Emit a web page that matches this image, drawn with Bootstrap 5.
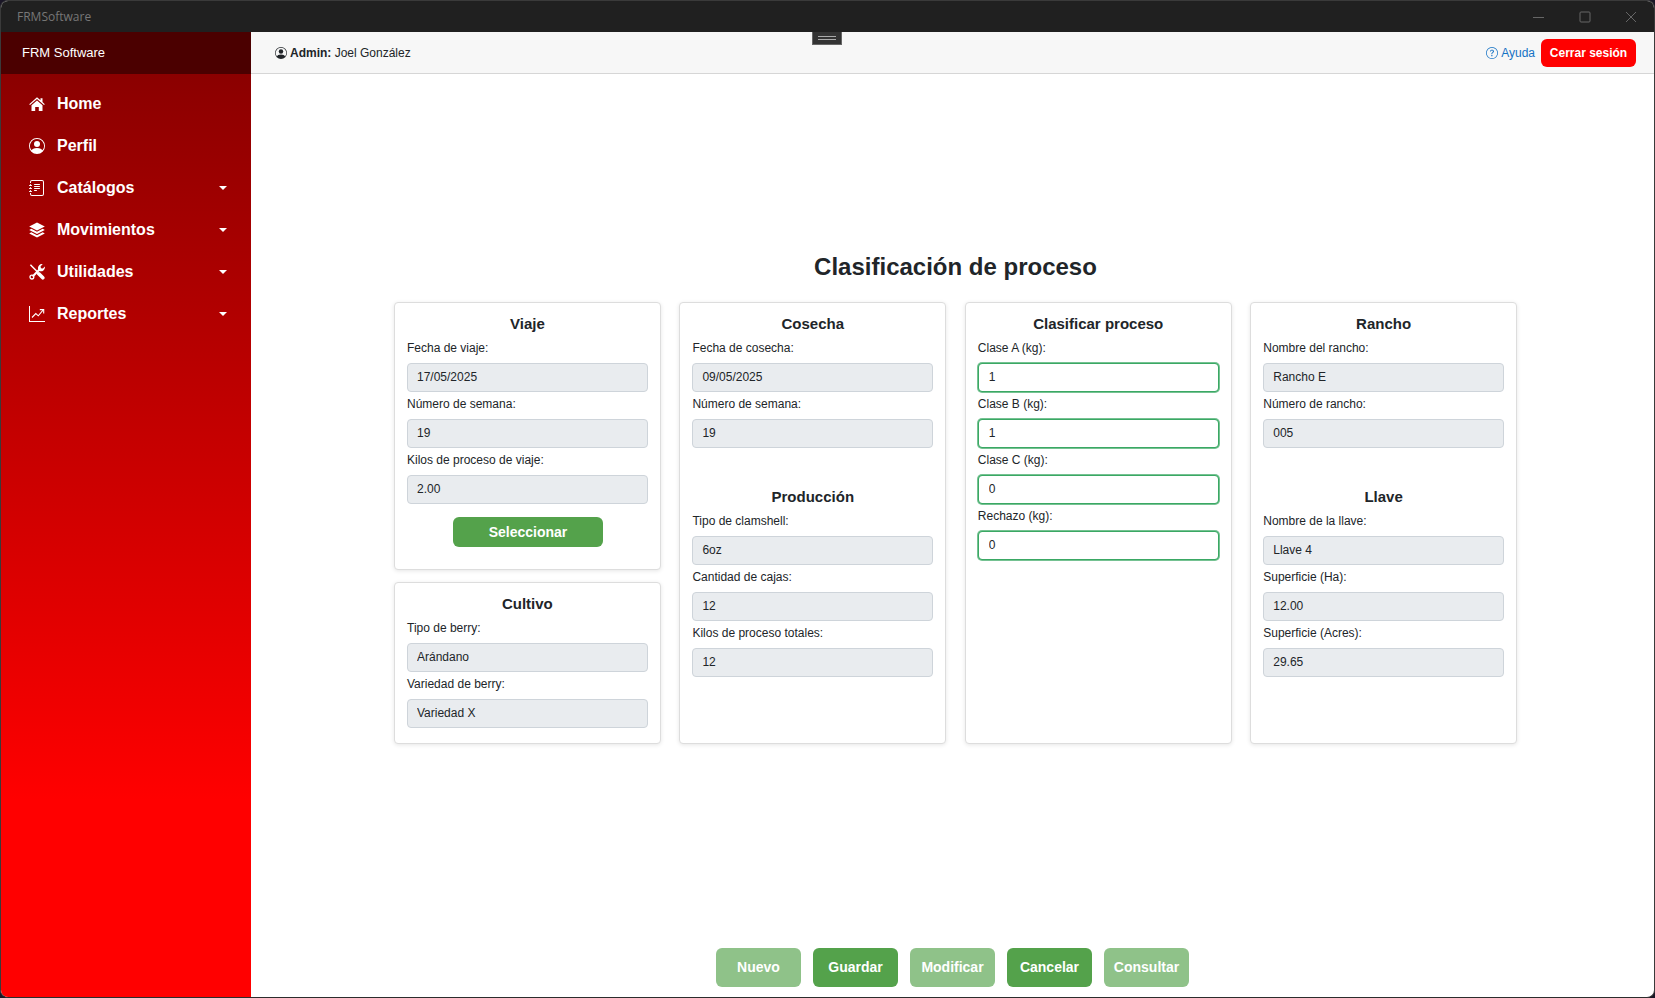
<!DOCTYPE html>
<html lang="es">
<head>
  <meta charset="UTF-8">
  <title>FRMSoftware</title>
  <link href="https://cdn.jsdelivr.net/npm/bootstrap@5.3.2/dist/css/bootstrap.min.css" rel="stylesheet">
  <style>
    html, body { height: 100%; overflow: hidden; }
    body { background: #1a1626; font-family: "Liberation Sans", Arial, sans-serif; font-size: 12px; color: #212529; }
    .app-window { height: 998px; border: 1px solid #3a3a3a; border-bottom-color: #2c2c2c; border-radius: 8px; overflow: hidden; background: #fff; }
    .title-bar { height: 31px; background: #202020; color: #777; font-family: "Open Sans", sans-serif; font-size: 12px; padding-left: 16px; }
    .win-controls { gap: 30px; padding-right: 15px; }
    .win-controls svg { display: block; width: 16px; height: 16px; }
    .app-body { height: 965px; position: relative; }
    .side-panel { width: 250px; color: #fff; }
    .side-brand { height: 42px; background: #4b0000; font-size: 13px; padding-left: 21px; }
    .side-menu { padding-top: 9px; background: linear-gradient(to bottom, #8b0000 0, #ff0000 726px); }
    .side-link { height: 42px; padding: 0 24px 0 28px; color: #fff; font-size: 16px; font-weight: 700; text-decoration: none; }
    .side-link:hover { color: #fff; }
    .side-link svg { width: 16px; height: 16px; margin-right: 12px; flex: none; fill: #fff; }
    .side-link.dropdown-toggle::after { margin-left: auto; }
    .top-strip { height: 42px; background: #f7f7f7; border-bottom: 1px solid #d6d6d6; padding: 0 18px 0 24px; }
    .top-strip svg { width: 12px; height: 12px; fill: currentColor; }
    .admin-info { gap: 3px; }
    .help-group { gap: 6px; }
    .help-link { color: #1572c4; font-size: 12px; text-decoration: none; gap: 3px; }
    .logout-btn { --bs-btn-padding-x: 0; --bs-btn-padding-y: 0; width: 95px; height: 28px; background: #f00; border: 0; color: #fff; font-size: 12px; font-weight: 700; border-radius: 6px; }
    .logout-btn:hover { background: #f00; color: #fff; }
    .drag-handle { position: absolute; left: 811px; top: 0; width: 30px; height: 13px; background: #333; border: 1px solid #666; border-top: 0; display: flex; flex-direction: column; justify-content: center; gap: 2px; padding: 0 5px; }
    .drag-handle span { display: block; height: 1px; background: #aaa; }
    .page-area { padding-top: 179px; }
    .page-head { font-size: 24px; font-weight: 700; line-height: 28px; margin: 0 0 21px; padding-left: 6px; }
    .forms-grid { width: 1123px; margin-left: 143px; display: grid; grid-template-columns: repeat(4, 1fr); gap: 18.67px; }
    .form-stack { gap: 12px; }
    .form-box { --bs-card-border-color: #dddddd; --bs-card-border-radius: 4px; --bs-card-inner-border-radius: 3px; box-shadow: 0 1px 4px rgba(0,0,0,.1); padding: 11px 12px 13px 12px; }
    .box-title { font-size: 15px; font-weight: 700; line-height: 19px; text-align: center; margin: 0 0 5px; }
    .box-title.next-section { margin-top: 37px; }
    .field-label { display: block; font-size: 12px; line-height: 18px; margin: 1px 0 6px; }
    .field-input { height: 29px; font-size: 12px; line-height: 14px; padding: 0 9px 2px; border-radius: 4px; border-color: #ced4da; margin-bottom: 2px; color: #212529; }
    .field-input:disabled { background: #e9ecef; }
    .field-input.is-live { padding: 0 10px 2px; border-color: #3aa864; box-shadow: 0 0 0 1px rgba(58,168,100,.7); }
    .pick-btn { --bs-btn-padding-y: 0; width: 150px; height: 30px; margin: 11px auto 9px 46px; padding-bottom: 3px; display: block; }
    .green-btn { background: #54a24b; border: 0; color: #fff; font-size: 14px; font-weight: 700; border-radius: 6px; padding: 0; }
    .green-btn:hover { background: #54a24b; color: #fff; }
    .green-btn:disabled { background: #54a24b; color: #fff; opacity: .65; }
    .action-bar { gap: 12px; padding-bottom: 10px; }
    .action-bar .green-btn { width: 85px; height: 39px; }
  </style>
</head>
<body>
  <div class="app-window">
    <div class="title-bar d-flex align-items-center justify-content-between">
      <span>FRMSoftware</span>
      <div class="win-controls d-flex align-items-center">
        <svg viewBox="0 0 16 16" stroke="#666" fill="none"><path d="M2 8.5h11"/></svg>
        <svg viewBox="0 0 16 16" stroke="#666" fill="none"><rect x="3" y="3" width="10" height="10" rx="1"/></svg>
        <svg viewBox="0 0 16 16" stroke="#666" fill="none"><path d="M3 3l10 10M13 3L3 13"/></svg>
      </div>
    </div>

    <div class="app-body d-flex">
      <aside class="side-panel d-flex flex-column flex-shrink-0">
        <div class="side-brand d-flex align-items-center flex-shrink-0">FRM Software</div>
        <nav class="side-menu flex-grow-1">
          <a href="#" class="side-link d-flex align-items-center">
            <svg viewBox="0 0 16 16"><path d="M8 1.200 11.500 4.300V2.200h2v3.900L15.800 8.200l-.8.900L8 3 1 9.100l-.8-.9z"/><path d="M8 4.400l5.500 4.800V15h-3.700v-4H6.200v4H2.500V9.200z"/></svg>
            Home
          </a>
          <a href="#" class="side-link d-flex align-items-center">
            <svg viewBox="0 0 16 16"><path d="M11 6a3 3 0 1 1-6 0 3 3 0 0 1 6 0"/><path fill-rule="evenodd" d="M0 8a8 8 0 1 1 16 0A8 8 0 0 1 0 8m8-7a7 7 0 0 0-5.468 11.37C3.242 11.226 4.805 10 8 10s4.757 1.225 5.468 2.37A7 7 0 0 0 8 1"/></svg>
            Perfil
          </a>
          <a href="#" class="side-link dropdown-toggle d-flex align-items-center">
            <svg viewBox="0 0 16 16"><path d="M5 10.5a.5.5 0 0 1 .5-.5h2a.5.5 0 0 1 0 1h-2a.5.5 0 0 1-.5-.5m0-2a.5.5 0 0 1 .5-.5h5a.5.5 0 0 1 0 1h-5a.5.5 0 0 1-.5-.5m0-2a.5.5 0 0 1 .5-.5h5a.5.5 0 0 1 0 1h-5a.5.5 0 0 1-.5-.5m0-2a.5.5 0 0 1 .5-.5h5a.5.5 0 0 1 0 1h-5a.5.5 0 0 1-.5-.5"/><path d="M3 0h10a2 2 0 0 1 2 2v12a2 2 0 0 1-2 2H3a2 2 0 0 1-2-2v-1h1v1a1 1 0 0 0 1 1h10a1 1 0 0 0 1-1V2a1 1 0 0 0-1-1H3a1 1 0 0 0-1 1v1H1V2a2 2 0 0 1 2-2"/><path d="M1 5v-.5a.5.5 0 0 1 1 0V5h.5a.5.5 0 0 1 0 1h-2a.5.5 0 0 1 0-1zm0 3v-.5a.5.5 0 0 1 1 0V8h.5a.5.5 0 0 1 0 1h-2a.5.5 0 0 1 0-1zm0 3v-.5a.5.5 0 0 1 1 0v.5h.5a.5.5 0 0 1 0 1h-2a.5.5 0 0 1 0-1z"/></svg>
            Catálogos
          </a>
          <a href="#" class="side-link dropdown-toggle d-flex align-items-center">
            <svg viewBox="0 0 16 16"><path d="M8 .5l7.800 4L8 8.500.2 4.500z"/><path d="M2.300 6.800 8 9.700l5.700-2.900 2.100 1.200L8 12 .2 8z"/><path d="M2.300 10.300 8 13.200l5.700-2.900 2.100 1.200L8 15.500.2 11.500z"/></svg>
            Movimientos
          </a>
          <a href="#" class="side-link dropdown-toggle d-flex align-items-center">
            <svg viewBox="0 0 16 16">
              <path d="M3.600 12.400 10.500 5.500" stroke="#fff" stroke-width="2.100" fill="none"/>
              <circle cx="2.900" cy="13.100" r="1.900" stroke="#fff" stroke-width="1.300" fill="none"/>
              <path d="M15.800 2.400a4 4 0 0 1-5.600 4.500L9.200 5.400A4 4 0 0 1 13.700.2l-2.100 2 .3 2 2 .3z"/>
              <path d="M1.400.8 8.800 8.200" stroke="#fff" stroke-width="1.500" fill="none"/>
              <path d="M9.800 9.800 13.800 13.800" stroke="#fff" stroke-width="3.600" stroke-linecap="round" fill="none"/>
            </svg>
            Utilidades
          </a>
          <a href="#" class="side-link dropdown-toggle d-flex align-items-center">
            <svg viewBox="0 0 16 16">
              <path d="M0 0h1v15h15v1H0z"/>
              <path d="M3 11.500 6.800 7.500 9.300 9.800 14 4.200" stroke="#fff" stroke-width="1.100" fill="none"/>
              <path d="M10.800 3.600h3.900v3.900" stroke="#fff" stroke-width="1.100" fill="none"/>
            </svg>
            Reportes
          </a>
        </nav>
      </aside>

      <main class="flex-grow-1 d-flex flex-column">
        <header class="top-strip d-flex align-items-center justify-content-between flex-shrink-0">
          <div class="admin-info d-flex align-items-center">
            <svg viewBox="0 0 16 16"><path d="M11 6a3 3 0 1 1-6 0 3 3 0 0 1 6 0"/><path fill-rule="evenodd" d="M0 8a8 8 0 1 1 16 0A8 8 0 0 1 0 8m8-7a7 7 0 0 0-5.468 11.37C3.242 11.226 4.805 10 8 10s4.757 1.225 5.468 2.37A7 7 0 0 0 8 1"/></svg>
            <span><b>Admin:</b> Joel González</span>
          </div>
          <div class="help-group d-flex align-items-center">
            <a href="#" class="help-link d-flex align-items-center">
              <svg viewBox="0 0 16 16"><path d="M8 15A7 7 0 1 1 8 1a7 7 0 0 1 0 14m0 1A8 8 0 1 0 8 0a8 8 0 0 0 0 16"/><path d="M5.255 5.786a.237.237 0 0 0 .241.247h.825c.138 0 .248-.113.266-.25.09-.656.54-1.134 1.342-1.134.686 0 1.314.343 1.314 1.168 0 .635-.374.927-.965 1.371-.673.489-1.206 1.06-1.168 1.987l.003.217a.25.25 0 0 0 .25.246h.811a.25.25 0 0 0 .25-.25v-.105c0-.718.273-.927 1.01-1.486.609-.463 1.244-.977 1.244-2.056 0-1.511-1.276-2.241-2.673-2.241-1.267 0-2.655.59-2.75 2.286m1.557 5.763c0 .533.425.927 1.01.927.609 0 1.028-.394 1.028-.927 0-.552-.42-.94-1.029-.94-.584 0-1.009.388-1.009.94"/></svg>
              Ayuda
            </a>
            <button class="btn logout-btn">Cerrar sesión</button>
          </div>
        </header>
        <div class="drag-handle"><span></span><span></span></div>

        <section class="page-area flex-grow-1">
          <h1 class="page-head text-center">Clasificación de proceso</h1>
          <div class="forms-grid">
            <div class="d-flex flex-column form-stack">
              <div class="card form-box">
                <h2 class="box-title">Viaje</h2>
                <label class="field-label">Fecha de viaje:</label>
                <input class="form-control field-input" value="17/05/2025" disabled>
                <label class="field-label">Número de semana:</label>
                <input class="form-control field-input" value="19" disabled>
                <label class="field-label">Kilos de proceso de viaje:</label>
                <input class="form-control field-input" value="2.00" disabled>
                <button class="btn green-btn pick-btn">Seleccionar</button>
              </div>
              <div class="card form-box">
                <h2 class="box-title">Cultivo</h2>
                <label class="field-label">Tipo de berry:</label>
                <input class="form-control field-input" value="Arándano" disabled>
                <label class="field-label">Variedad de berry:</label>
                <input class="form-control field-input" value="Variedad X" disabled>
              </div>
            </div>

            <div class="card form-box">
              <h2 class="box-title">Cosecha</h2>
              <label class="field-label">Fecha de cosecha:</label>
              <input class="form-control field-input" value="09/05/2025" disabled>
              <label class="field-label">Número de semana:</label>
              <input class="form-control field-input" value="19" disabled>
              <h2 class="box-title next-section">Producción</h2>
              <label class="field-label">Tipo de clamshell:</label>
              <input class="form-control field-input" value="6oz" disabled>
              <label class="field-label">Cantidad de cajas:</label>
              <input class="form-control field-input" value="12" disabled>
              <label class="field-label">Kilos de proceso totales:</label>
              <input class="form-control field-input" value="12" disabled>
            </div>

            <div class="card form-box">
              <h2 class="box-title">Clasificar proceso</h2>
              <label class="field-label">Clase A (kg):</label>
              <input class="form-control field-input is-live" value="1">
              <label class="field-label">Clase B (kg):</label>
              <input class="form-control field-input is-live" value="1">
              <label class="field-label">Clase C (kg):</label>
              <input class="form-control field-input is-live" value="0">
              <label class="field-label">Rechazo (kg):</label>
              <input class="form-control field-input is-live" value="0">
            </div>

            <div class="card form-box">
              <h2 class="box-title">Rancho</h2>
              <label class="field-label">Nombre del rancho:</label>
              <input class="form-control field-input" value="Rancho E" disabled>
              <label class="field-label">Número de rancho:</label>
              <input class="form-control field-input" value="005" disabled>
              <h2 class="box-title next-section">Llave</h2>
              <label class="field-label">Nombre de la llave:</label>
              <input class="form-control field-input" value="Llave 4" disabled>
              <label class="field-label">Superficie (Ha):</label>
              <input class="form-control field-input" value="12.00" disabled>
              <label class="field-label">Superficie (Acres):</label>
              <input class="form-control field-input" value="29.65" disabled>
            </div>
          </div>
        </section>

        <div class="action-bar d-flex justify-content-center flex-shrink-0">
          <button class="btn green-btn" disabled>Nuevo</button>
          <button class="btn green-btn">Guardar</button>
          <button class="btn green-btn" disabled>Modificar</button>
          <button class="btn green-btn">Cancelar</button>
          <button class="btn green-btn" disabled>Consultar</button>
        </div>
      </main>
    </div>
  </div>
  <script src="https://cdn.jsdelivr.net/npm/bootstrap@5.3.2/dist/js/bootstrap.bundle.min.js"></script>
</body>
</html>
